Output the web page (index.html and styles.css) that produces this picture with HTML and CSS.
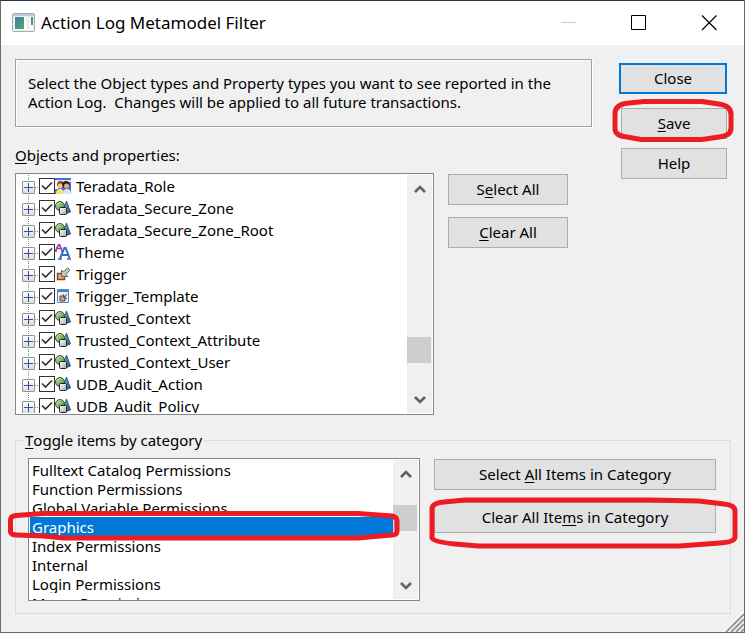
FILE: index.html
```html
<!DOCTYPE html>
<html lang="en">
<head>
<meta charset="utf-8">
<title>Action Log Metamodel Filter</title>
<link rel="stylesheet" href="styles.css">
</head>
<body>
<svg class="sprite" aria-hidden="true">
  <defs>
    <linearGradient id="ball" x1="0" y1="0" x2="1" y2="1"><stop offset="0" stop-color="#d2f0b8"/><stop offset="1" stop-color="#3f7d2c"/></linearGradient>
    <linearGradient id="cone" x1="0" y1="0" x2="1" y2="0"><stop offset="0" stop-color="#8cc4ea"/><stop offset="1" stop-color="#194e78"/></linearGradient>
    <linearGradient id="cube" x1="0" y1="0" x2="1" y2="1"><stop offset="0" stop-color="#fff"/><stop offset="1" stop-color="#aaa"/></linearGradient>
    <linearGradient id="pane" x1="0" y1="0" x2="1" y2="1"><stop offset="0" stop-color="#3b7fae"/><stop offset="1" stop-color="#4fa868"/></linearGradient>
    <symbol id="shapes" viewBox="0 0 16 16">
      <path d="M11.500 1 7.500 11.500 10.500 14 15.500 12Z" fill="url(#cone)" stroke="#284f6c" stroke-width=".8"/>
      <circle cx="5" cy="6" r="4.500" fill="url(#ball)" stroke="#2d5a25"/>
      <rect x="4.500" y="7.500" width="7" height="7" rx="1" fill="url(#cube)" stroke="#222"/>
    </symbol>
    <symbol id="people" viewBox="0 0 16 16">
      <path fill="#3c70d8" d="M0 0h16v16H0z"/><path fill="#dce9fa" d="M0 2h16v2H0z"/><path fill="#fff" d="M0 3h3v8H0z"/>
      <circle cx="5.500" cy="6.500" r="3.500" fill="#8b481d"/><circle cx="5" cy="8" r="2.500" fill="#f5c290"/>
      <circle cx="11" cy="6.500" r="3.500" fill="#291b16"/><circle cx="11.500" cy="8" r="2.500" fill="#edaa79"/>
      <path d="M1 16q0-5 4-5t4 5Z" fill="#ffe56a"/><path d="M8 16q0-5 4-5t4 5Z" fill="#d8e6f8"/>
    </symbol>
    <symbol id="theme" viewBox="0 0 16 16">
      <path d="M.7 6.500 3.500.8h1L7 6.500M2 4.500h4M0 7h2m4 0h2" fill="none" stroke="#983dab" stroke-width="1.600"/>
      <path d="M5 14.500 9.300 4h1.400l4 10.500M7 11h6" fill="none" stroke="#3d6bc3" stroke-width="2"/>
      <path d="M3 15h4m5 0h4" stroke="#3d6bc3" stroke-width="1.600"/>
    </symbol>
    <symbol id="trigger" viewBox="0 0 16 16">
      <path d="M2.500 7.500h7v6h-7z" fill="#f6a766" stroke="#7b482a" stroke-width="1.400"/>
      <path d="M6.500 4v6.500H13L10.800 8.500 15 4.200 12.500 1.800 8.500 6Z" fill="#c5c8c5" stroke="#606662"/>
    </symbol>
    <symbol id="template" viewBox="0 0 16 16">
      <path d="M2.500 1.500h11v13h-11z" fill="#e7f0fa" stroke="#5c88b6"/><path d="M3 2h10v2H3z" fill="#4483c4"/>
      <path d="M5 8h5v5H5z" fill="#d9a275" stroke="#54483e"/><path d="m8 6 1 4 3 .5M12 6 9 10" fill="none" stroke="#4e5a60"/>
    </symbol>
    <symbol id="tick" viewBox="0 0 14 14"><path d="m2 6.500 3.500 3.500L12 3.500" fill="none" stroke="#333" stroke-width="1.700"/></symbol>
    <symbol id="up" viewBox="0 0 12 10"><path d="M1 8 6 3l5 5" fill="none" stroke="#606060" stroke-width="2.600"/></symbol>
    <symbol id="down" viewBox="0 0 12 10"><path d="m1 2 5 5 5-5" fill="none" stroke="#606060" stroke-width="2.600"/></symbol>
  </defs>
</svg>
<div class="window">
  <header class="titlebar">
    <svg class="app-icon" viewBox="0 0 24 20" aria-hidden="true"><rect x=".5" y=".5" width="22" height="18" rx="1" fill="#e9edef" stroke="#a4acb0"/><path d="M1 1h21v2H1z" fill="#c5ccd0"/><path d="M2 4h19v13H2z" fill="#fff"/><path d="M3 4h9v12H3z" fill="url(#pane)"/><path d="M14 4h4v12h-4z" fill="#eee"/><path d="M19 4h2v8h-2z" fill="url(#pane)"/></svg>
    <h1>Action Log Metamodel Filter</h1>
    <div class="window-buttons">
      <button type="button" aria-label="Minimize" disabled><svg viewBox="0 0 16 16"><path d="M0 7.500h15" stroke="#ccc"/></svg></button>
      <button type="button" aria-label="Maximize"><svg viewBox="0 0 16 16"><path d="M.5.500h14v14H.5z" fill="none" stroke="#000"/></svg></button>
      <button type="button" aria-label="Close window"><svg viewBox="0 0 16 16"><path d="m1 .5 14.500 14.500M15.500 .5 1 15" stroke="#000" stroke-width="1.200"/></svg></button>
    </div>
  </header>
  <main>
    <div class="upper">
      <div class="objects">
        <p class="message">Select the Object types and Property types you want to see reported in the Action Log.&nbsp; Changes will be applied to all future transactions.</p>
        <h2><u>O</u>bjects and properties:</h2>
        <div class="object-row">
          <div class="box tree">
            <ul>
              <li><button type="button" class="expand" aria-label="Expand"></button><label><span class="check"><input type="checkbox" checked><svg><use href="#tick"/></svg></span><svg class="icon"><use href="#people"/></svg><span>Teradata_Role</span></label></li>
              <li><button type="button" class="expand" aria-label="Expand"></button><label><span class="check"><input type="checkbox" checked><svg><use href="#tick"/></svg></span><svg class="icon"><use href="#shapes"/></svg><span>Teradata_Secure_Zone</span></label></li>
              <li><button type="button" class="expand" aria-label="Expand"></button><label><span class="check"><input type="checkbox" checked><svg><use href="#tick"/></svg></span><svg class="icon"><use href="#shapes"/></svg><span>Teradata_Secure_Zone_Root</span></label></li>
              <li><button type="button" class="expand" aria-label="Expand"></button><label><span class="check"><input type="checkbox" checked><svg><use href="#tick"/></svg></span><svg class="icon"><use href="#theme"/></svg><span>Theme</span></label></li>
              <li><button type="button" class="expand" aria-label="Expand"></button><label><span class="check"><input type="checkbox" checked><svg><use href="#tick"/></svg></span><svg class="icon"><use href="#trigger"/></svg><span>Trigger</span></label></li>
              <li><button type="button" class="expand" aria-label="Expand"></button><label><span class="check"><input type="checkbox" checked><svg><use href="#tick"/></svg></span><svg class="icon"><use href="#template"/></svg><span>Trigger_Template</span></label></li>
              <li><button type="button" class="expand" aria-label="Expand"></button><label><span class="check"><input type="checkbox" checked><svg><use href="#tick"/></svg></span><svg class="icon"><use href="#shapes"/></svg><span>Trusted_Context</span></label></li>
              <li><button type="button" class="expand" aria-label="Expand"></button><label><span class="check"><input type="checkbox" checked><svg><use href="#tick"/></svg></span><svg class="icon"><use href="#shapes"/></svg><span>Trusted_Context_Attribute</span></label></li>
              <li><button type="button" class="expand" aria-label="Expand"></button><label><span class="check"><input type="checkbox" checked><svg><use href="#tick"/></svg></span><svg class="icon"><use href="#shapes"/></svg><span>Trusted_Context_User</span></label></li>
              <li><button type="button" class="expand" aria-label="Expand"></button><label><span class="check"><input type="checkbox" checked><svg><use href="#tick"/></svg></span><svg class="icon"><use href="#shapes"/></svg><span>UDB_Audit_Action</span></label></li>
              <li><button type="button" class="expand" aria-label="Expand"></button><label><span class="check"><input type="checkbox" checked><svg><use href="#tick"/></svg></span><svg class="icon"><use href="#shapes"/></svg><span>UDB_Audit_Policy</span></label></li>
            </ul>
            <div class="scrollbar">
              <button type="button" aria-label="Scroll up"><svg><use href="#up"/></svg></button>
              <div class="track tree-track"><div class="thumb"></div></div>
              <button type="button" aria-label="Scroll down"><svg><use href="#down"/></svg></button>
            </div>
          </div>
          <div class="stack bulk">
            <button type="button" class="btn">S<u>e</u>lect All</button>
            <button type="button" class="btn"><u>C</u>lear All</button>
          </div>
        </div>
      </div>
      <div class="commands">
        <button type="button" class="btn default">Close</button>
        <div class="marked">
          <button type="button" class="btn"><u>S</u>ave</button>
          <svg class="mark mark-save" viewBox="0 0 122 43" preserveAspectRatio="none" aria-hidden="true"><path d="M3 31V15Q3 5 17 4L32 2.500H90L107 5Q119 7 119 15V29Q119 37 107 38L90 40.500H29L15 38Q4 37 3 31Z"/></svg>
        </div>
        <button type="button" class="btn">Help</button>
      </div>
    </div>
    <fieldset>
      <legend><label for="category"><u>T</u>oggle items by category</label></legend>
      <div class="category-row">
        <div class="marked">
          <div class="box list">
            <select id="category" size="8">
              <option>Fulltext Catalog Permissions</option>
              <option>Function Permissions</option>
              <option>Global Variable Permissions</option>
              <option selected>Graphics</option>
              <option>Index Permissions</option>
              <option>Internal</option>
              <option>Login Permissions</option>
              <option>Macro Permissions</option>
            </select>
            <div class="scrollbar">
              <button type="button" aria-label="Scroll up"><svg><use href="#up"/></svg></button>
              <div class="track list-track"><div class="thumb"></div></div>
              <button type="button" aria-label="Scroll down"><svg><use href="#down"/></svg></button>
            </div>
          </div>
          <svg class="mark mark-graphics" viewBox="0 0 392 30" preserveAspectRatio="none" aria-hidden="true"><path d="M2.500 20V9Q2.500 5 8 4.500L35 2.500H350L384 5Q389 6 389 10V20Q389 24 384 24L350 27H55L35 25 9 24Q2 24 2.500 20Z"/></svg>
        </div>
        <div class="stack">
          <button type="button" class="btn">Select <u>A</u>ll Items in Category</button>
          <div class="marked">
            <button type="button" class="btn">Clear All Ite<u>m</u>s in Category</button>
            <svg class="mark mark-clear" viewBox="0 0 309 52" preserveAspectRatio="none" aria-hidden="true"><path d="M3 41V12Q3 6 15 5L36 3H220L270 4 295 7Q306 8 306 14V40Q306 45 291 46L250 49H49L26 47Q5 45 3 41Z"/></svg>
          </div>
        </div>
      </div>
    </fieldset>
  </main>
  <svg class="grip" viewBox="0 0 20 20" aria-hidden="true"><path d="M0 20 20 0M6 20 20 6M11 20l9-9M16 20l4-4" stroke="#fff" stroke-width="2"/><path d="M2 20 20 2M7 20 20 7M12 20l8-8M17 20l3-3" stroke="#999" stroke-width="2"/></svg>
</div>
</body>
</html>
```

FILE: styles.css
```css
* { box-sizing: border-box; }

body {
  margin: 0;
  font: 15px/19px "Noto Sans", "Open Sans", sans-serif;
  color: #000;
}

button, select { font: inherit; color: inherit; }
u { text-underline-offset: 2px; text-decoration-thickness: 1px; }
.sprite { position: absolute; width: 0; height: 0; }

.window {
  position: relative;
  min-height: 100vh;
  background: #f0f0f0;
  border: 1px solid #6b6b6b;
  border-top-color: #26344f;
}

.titlebar {
  display: flex;
  align-items: center;
  height: 44px;
  padding-left: 11px;
  background: #fff;
}
.app-icon { width: 24px; height: 20px; margin-right: 5px; }
h1 { flex: 1; margin: 0; font: 17px/24px "Noto Sans", sans-serif; }
.window-buttons { display: flex; }
.window-buttons button {
  display: grid;
  place-items: center;
  width: 70px;
  height: 44px;
  padding: 0;
  border: 0;
  background: none;
}
.window-buttons svg { width: 16px; height: 16px; }

main { padding: 14px 13px 16px 14px; }
.upper { display: flex; gap: 27px; }
.objects { flex: 1; }
.commands { width: 108px; margin: 4px 4px 0 0; padding-left: 2px; }
.commands > * + * { margin-top: 9px; }
.commands > .default { width: 108px; margin: 0 0 14px -2px; }

.message {
  min-height: 68px;
  margin: 0;
  padding: 14px 12px;
  border: 1px solid #a0a0a0;
  box-shadow: 1px 1px #fff, inset 1px 1px #fff;
}
h2 { margin: 19px 0 8px; font: inherit; }
.object-row { display: flex; gap: 14px; padding-right: 24px; }

.btn {
  display: block;
  width: 100%;
  height: 31px;
  padding: 0;
  border: 1px solid #adadad;
  background: #e1e1e1;
  text-align: center;
}
.btn.default { border: 2px solid #0078d7; }
.stack { display: flex; flex-direction: column; gap: 12px; padding-top: 1px; }
.bulk { width: 120px; }

.box { display: flex; background: #fff; border: 1px solid #828790; overflow: hidden; }
.tree { flex: 1; height: 242px; padding: 1px; }
ul { flex: 1; margin: 0; padding: 0 0 0 5px; list-style: none; overflow: hidden; }
li {
  display: flex;
  align-items: center;
  height: 22px;
  background: repeating-linear-gradient(#888 0 1px, transparent 1px 2px) 6px 0 / 1px 100% no-repeat,
    repeating-linear-gradient(90deg, #888 0 1px, transparent 1px 2px) 7px 12px / 11px 1px no-repeat;
}
.expand {
  width: 13px;
  height: 13px;
  margin: 3px 4px 0 0;
  padding: 0;
  border: 1px solid #919191;
  border-radius: 1px;
  background: linear-gradient(#31519c, #31519c) center / 9px 1px no-repeat,
    linear-gradient(#31519c, #31519c) center / 1px 9px no-repeat,
    linear-gradient(#fff, #ddd);
}
label { display: flex; align-items: center; }
.check { display: grid; width: 16px; height: 16px; }
.check > * { grid-area: 1 / 1; }
.check input {
  appearance: none;
  width: 16px;
  height: 16px;
  margin: 0;
  border: 1px solid #333;
  background: #fff;
}
.check svg { width: 14px; height: 14px; margin: 1px; pointer-events: none; visibility: hidden; }
.check input:checked + svg { visibility: visible; }
.icon { width: 16px; height: 16px; margin-right: 5px; }

.scrollbar { display: flex; flex-direction: column; width: 25px; background: #f0f0f0; }
.scrollbar button { height: 28px; padding: 0; border: 0; background: none; line-height: 0; }
.scrollbar button:last-child { height: 26px; }
.scrollbar svg { width: 12px; height: 10px; }
.track { display: flex; flex-direction: column; flex: 1; }
.thumb { height: 26px; background: #cdcdcd; margin-right: 1px; }
.tree-track { padding-top: 134px; }
.list-track { padding-top: 17px; }

fieldset { min-width: 0; margin: 15px 0 0; padding: 8px 14px 12px 12px; border: 1px solid #dcdcdc; }
legend { margin-left: -5px; padding: 0 2px; line-height: 20px; }
.category-row { display: grid; grid-template-columns: 392fr 282fr; gap: 14px; }
.list { height: 143px; padding: 1px; }
select {
  appearance: none;
  flex: 1;
  min-width: 0;
  height: 152px;
  padding: 0;
  border: 0;
  outline: 0;
  background: #fff;
  overflow: hidden;
}
option { height: 19px; min-height: 0; padding: 0 2px; overflow: hidden; }
option:checked {
  background: linear-gradient(#0078d7, #0078d7);
  -webkit-text-fill-color: #fff;
}

.marked { position: relative; }
.mark { position: absolute; fill: none; stroke: #ed1c24; stroke-width: 5; pointer-events: none; }
.mark-save { left: -9px; top: -9px; width: calc(100% + 16px); height: 43px; }
.mark-graphics { left: -20px; top: 53px; width: 100%; height: 30px; }
.mark-clear { left: -5px; top: -5px; width: calc(100% + 27px); height: 52px; }

.grip { position: absolute; right: 0; bottom: 0; width: 20px; height: 20px; }
```
